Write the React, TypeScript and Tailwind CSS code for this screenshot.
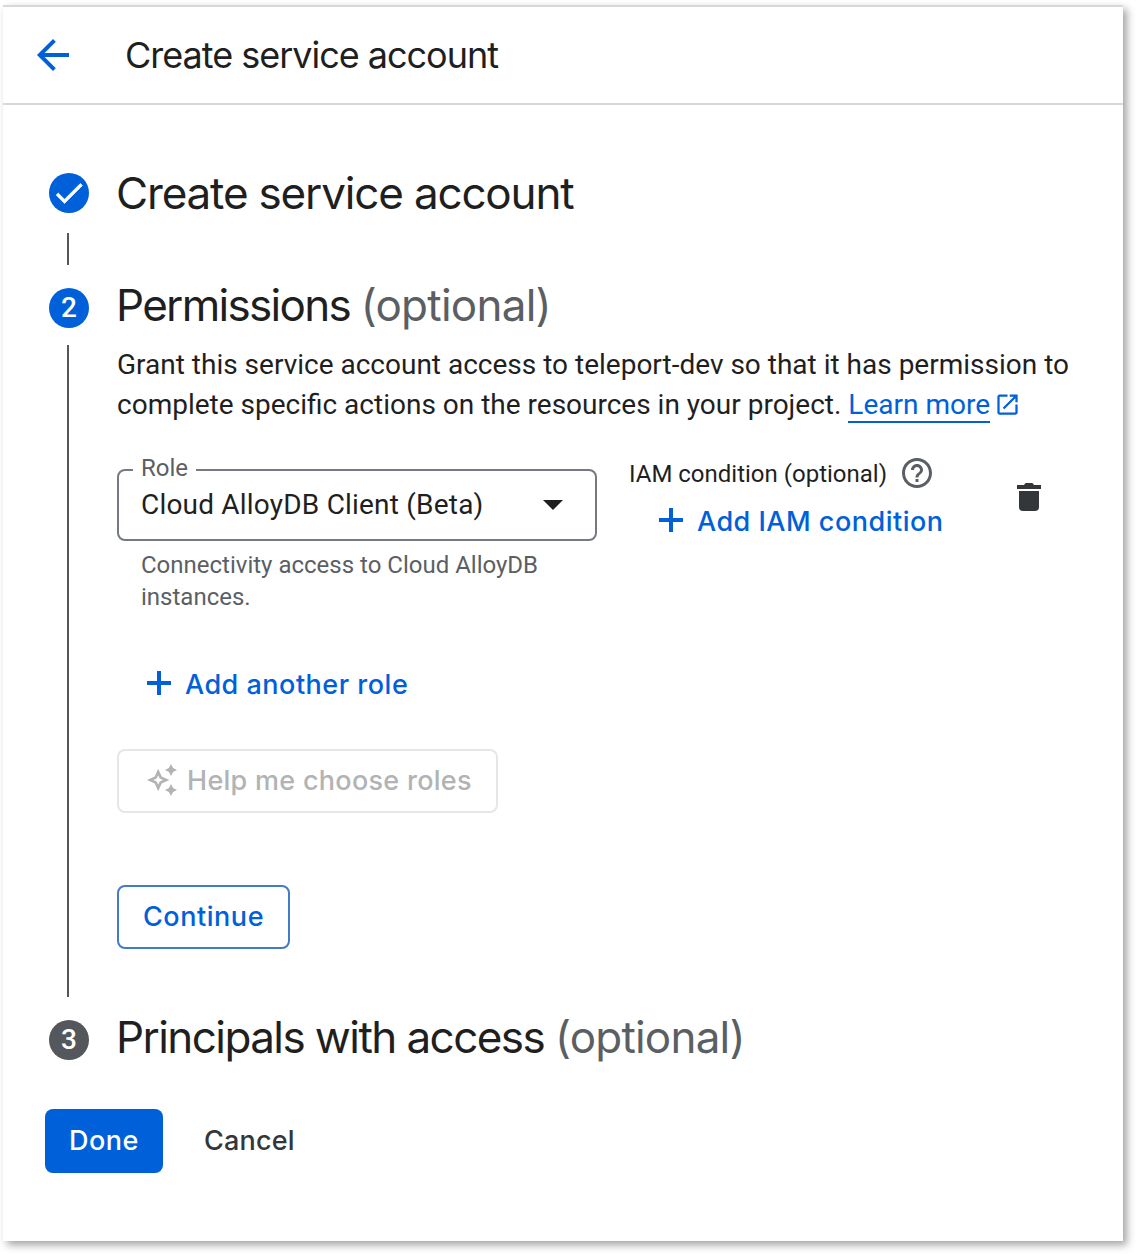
import type { ReactNode } from "react";

function Plus() {
  return (
    <svg width="24" height="24" viewBox="0 0 24 24" fill="currentColor" className="-mt-1 shrink-0">
      <path d="M10 0h4v10h10v4H14v10h-4V14H0v-4h10z" />
    </svg>
  );
}

function Badge({ children, className }: { children: ReactNode; className: string }) {
  return (
    <div className={`flex size-10 shrink-0 items-center justify-center rounded-full font-[Roboto] text-[28px] leading-10 font-medium text-white ${className}`}>
      {children}
    </div>
  );
}

const heading = "-ml-px font-[Inter] text-[44px] leading-[52px] whitespace-nowrap text-[#1f1f1f]";

export default function App() {
  return (
    <div className="h-[1254px] w-[1136px] overflow-hidden bg-white pt-[5px] pl-[3px] font-[Roboto,sans-serif] text-[#1f1f1f]">
      <main className="h-[1236px] w-[1120px] border-t-2 border-[#d7d7dd] bg-white shadow-[4px_4px_8px_0px_rgba(0,0,0,0.36)]">
        <header className="flex h-[98px] items-center border-b-2 border-[#d7d7dd] pl-[26px]">
          <svg width="48" height="48" viewBox="0 0 24 24" fill="#0060d9">
            <path d="M20 11H7.83l5.59-5.59L12 4l-8 8 8 8 1.41-1.41L7.83 13H20v-2z" />
          </svg>
          <h1 className="ml-12 font-[Inter] text-[36px] leading-[48px] tracking-[-1.02px] whitespace-nowrap">Create service account</h1>
        </header>

        <section className="mt-[68px] flex h-[115px] gap-7 pl-[46px]">
          <div className="flex w-10 flex-col items-center">
            <Badge className="bg-[#0060d9]">
              <svg width="36" height="36" viewBox="0 0 24 24" fill="white" stroke="white" strokeWidth="0.4">
                <path d="M9 16.17L4.83 12l-1.42 1.41L9 19 21 7l-1.41-1.41z" />
              </svg>
            </Badge>
            <div className="mt-5 mr-0.5 h-8 w-0.5 bg-[#54585d]" />
          </div>
          <h2 className={`${heading} -mt-1.5 tracking-[-1.17px]`}>Create service account</h2>
        </section>

        <section className="flex h-[732px] gap-7 pl-[46px]">
          <div className="flex w-10 flex-col items-center">
            <Badge className="bg-[#0060d9]">2</Badge>
            <div className="mt-[17px] mr-0.5 h-[652px] w-0.5 bg-[#54585d]" />
          </div>
          <div className="-mt-[9px] flex flex-col items-start">
            <h2 className={`${heading} tracking-[-1.7px]`}>Permissions <span className="tracking-[-0.75px] text-[#5b5f64]">(optional)</span></h2>
            <p className="mt-[14px] text-[28px] leading-10 whitespace-nowrap">
              Grant this service account access to teleport-dev so that it has permission to
              <br />
              complete specific actions on the resources in your project.{" "}
              <a className="inline-block border-b-2 border-[#0060d9] leading-8 text-[#0060d9]">Learn more</a>
              <svg className="ml-[3.6px] inline-block align-[-4px]" width="27" height="27" viewBox="0 0 24 24" fill="#0060d9">
                <path d="M19 19H5V5h7V3H5c-1.11 0-2 .9-2 2v14c0 1.1.89 2 2 2h14c1.1 0 2-.9 2-2v-7h-2v7zM14 3v2h3.59l-9.83 9.83 1.41 1.41L19 6.41V10h2V3h-7z" />
              </svg>
            </p>

            <div className="mt-11 flex">
              <div className="w-[480px]">
                <div className="relative flex h-[72px] items-center justify-between rounded-lg border-2 border-[#747a80] pr-8 pl-[22px]">
                  <span className="absolute -top-[17px] left-3.5 bg-white px-2 text-[24px] leading-7 text-[#5b5f64]">Role</span>
                  <span className="text-[28px] leading-10 tracking-[0.2px]">Cloud AlloyDB Client (Beta)</span>
                  <svg width="20" height="10" viewBox="0 0 20 10" fill="#1f1f1f"><path d="M0 0h20L10 10z" /></svg>
                </div>
                <p className="mt-2 pl-6 text-[24px] leading-8 text-[#5b5f64]">Connectivity access to Cloud AlloyDB<br />instances.</p>
              </div>
              <div className="ml-8 w-[388px]">
                <div className="-mt-[14px] flex h-9 items-center">
                  <span className="w-[270px] pt-0.5 text-[24px] leading-8 whitespace-nowrap">IAM condition (optional)</span>
                  <svg width="36" height="36" viewBox="0 0 24 24" fill="#5b5f64" className="shrink-0">
                    <path d="M11 18h2v-2h-2v2zm1-16C6.48 2 2 6.48 2 12s4.48 10 10 10 10-4.48 10-10S17.52 2 12 2zm0 18c-4.41 0-8-3.59-8-8s3.59-8 8-8 8 3.59 8 8-3.59 8-8 8zm0-14c-2.21 0-4 1.79-4 4h2c0-1.1.9-2 2-2s2 .9 2 2c0 2-3 1.75-3 5h2c0-2.25 3-2.5 3-5 0-2.21-1.79-4-4-4z" />
                  </svg>
                </div>
                <div className="mt-[13px] flex h-9 items-center gap-[14px] pl-[30px] font-[Inter] text-[27px] font-medium tracking-[0.5px] text-[#0060d9]">
                  <Plus />
                  <span className="whitespace-nowrap">Add IAM condition</span>
                </div>
              </div>
              <svg className="mt-3.5" width="24" height="28" viewBox="0 0 24 28" fill="#343739">
                <path d="M0 2h7q1-2 2-2h6q1 0 2 2h7v4H0zM2 8h20v16q0 4-4 4H6q-4 0-4-4z" />
              </svg>
            </div>

            <div className="mt-[52px] flex h-10 items-center gap-[14px] pl-[30px] font-[Inter] text-[27px] font-medium tracking-[0.5px] text-[#0060d9]">
              <Plus />
              <span>Add another role</span>
            </div>

            <button className="mt-11 flex h-16 w-[381px] items-center rounded-lg border-2 border-[#e5e6e6] pl-7 font-[Inter] text-[27px] font-medium tracking-[0.28px] whitespace-nowrap text-[#b1b3b5]">
              <svg width="32" height="32" viewBox="0 0 32 32" fill="currentColor" className="-mt-0.5 mr-2 shrink-0">
                <path fillRule="evenodd" d="M11.200 4.800l3.500 7.700L22.400 16l-7.700 3.500-3.500 7.700-3.500-7.700L0 16l7.700-3.500zM11.200 11.200l-1.500 3.300L6.400 16l3.300 1.500 1.500 3.300 1.500-3.300L16 16l-3.300-1.500z" />
                <path d="M24 0l2.100 3.900L30 6l-3.900 2.100L24 12l-2.100-3.900L18 6l3.900-2.100zM24 20l2.100 3.900L30 26l-3.900 2.100L24 32l-2.100-3.900L18 26l3.900-2.100z" />
              </svg>
              <span>Help me choose roles</span>
            </button>

            <button className="mt-[72px] flex h-16 w-[173px] items-center justify-center rounded-lg border-2 border-[#427bc6] font-[Inter] text-[27px] font-medium tracking-[0.55px] text-[#0060d9]">
              Continue
            </button>
          </div>
        </section>

        <section className="flex gap-7 pl-[46px]">
          <Badge className="bg-[#54575c]">3</Badge>
          <h2 className={`${heading} -mt-[9px] tracking-[-1.57px]`}>Principals with access <span className="tracking-[-0.8px] text-[#5b5f64]">(optional)</span></h2>
        </section>

        <footer className="mt-[46px] flex items-center pl-[42px] font-[Inter] text-[27px] font-medium">
          <button className="h-16 w-[118px] rounded-lg bg-[#0060d9] tracking-[0.5px] text-white">Done</button>
          <button className="ml-[41px] tracking-[0.2px] text-[#343739]">Cancel</button>
        </footer>
      </main>
    </div>
  );
}
